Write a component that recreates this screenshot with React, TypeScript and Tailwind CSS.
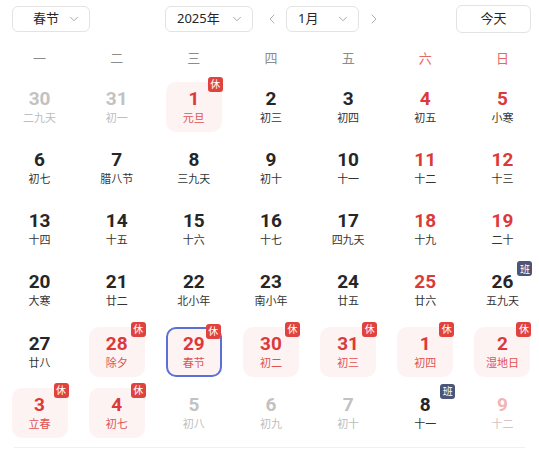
import { ChevronDown, ChevronLeft, ChevronRight } from "lucide-react";

type Day = {
  d: number;
  l: string;
  other?: boolean;
  rest?: boolean;
  work?: boolean;
  selected?: boolean;
};

const WEEK = ["一", "二", "三", "四", "五", "六", "日"];

const ROWS: Day[][] = [
  [
    { d: 30, l: "二九天", other: true },
    { d: 31, l: "初一", other: true },
    { d: 1, l: "元旦", rest: true },
    { d: 2, l: "初三" },
    { d: 3, l: "初四" },
    { d: 4, l: "初五" },
    { d: 5, l: "小寒" },
  ],
  [
    { d: 6, l: "初七" },
    { d: 7, l: "腊八节" },
    { d: 8, l: "三九天" },
    { d: 9, l: "初十" },
    { d: 10, l: "十一" },
    { d: 11, l: "十二" },
    { d: 12, l: "十三" },
  ],
  [
    { d: 13, l: "十四" },
    { d: 14, l: "十五" },
    { d: 15, l: "十六" },
    { d: 16, l: "十七" },
    { d: 17, l: "四九天" },
    { d: 18, l: "十九" },
    { d: 19, l: "二十" },
  ],
  [
    { d: 20, l: "大寒" },
    { d: 21, l: "廿二" },
    { d: 22, l: "北小年" },
    { d: 23, l: "南小年" },
    { d: 24, l: "廿五" },
    { d: 25, l: "廿六" },
    { d: 26, l: "五九天", work: true },
  ],
  [
    { d: 27, l: "廿八" },
    { d: 28, l: "除夕", rest: true },
    { d: 29, l: "春节", rest: true, selected: true },
    { d: 30, l: "初二", rest: true },
    { d: 31, l: "初三", rest: true },
    { d: 1, l: "初四", rest: true, other: true },
    { d: 2, l: "湿地日", rest: true, other: true },
  ],
  [
    { d: 3, l: "立春", rest: true, other: true },
    { d: 4, l: "初七", rest: true, other: true },
    { d: 5, l: "初八", other: true },
    { d: 6, l: "初九", other: true },
    { d: 7, l: "初十", other: true },
    { d: 8, l: "十一", other: true, work: true },
    { d: 9, l: "十二", other: true },
  ],
];

const Select = ({ label, width, pad = "pl-[11px]" }: { label: string; width: string; pad?: string }) => (
  <div
    className={`flex h-[26px] ${width} ${pad} items-center justify-between rounded-[6px] border border-[#e3e3e3] bg-white pr-[8px] text-[13px] text-[#262626]`}
  >
    <span>{label}</span>
    <ChevronDown className="h-[14px] w-[14px] text-[#9a9a9a]" strokeWidth={1.5} />
  </div>
);

const Cell = ({ day, col }: { day: Day; col: number }) => {
  const weekend = col >= 5;
  let num = "text-[#262626]";
  let lunar = "text-[#333333]";
  if (day.rest) {
    num = "text-[#dc3a3a]";
    lunar = "text-[#e05252]";
  } else if (day.work) {
    num = "text-[#262626]";
    lunar = "text-[#333333]";
  } else if (day.other && weekend) {
    num = "text-[#f2b4b4]";
    lunar = "text-[#d5c4c4]";
  } else if (day.other) {
    num = "text-[#c2c2c2]";
    lunar = "text-[#bdbdbd]";
  } else if (weekend) {
    num = "text-[#dc3a3a]";
  }

  return (
    <div className="flex h-[61.25px] items-center justify-center">
      <div
        className={`relative flex h-[50px] w-[56px] flex-col items-center justify-center rounded-[10px] pb-[1px] ${
          day.rest ? "bg-[#fdf3f2]" : ""
        } ${day.selected ? "border-2 border-[#5b6fd9]" : ""}`}
      >
        <span className={`font-['Roboto'] text-[19px] font-bold leading-[22px] ${num}`}>{day.d}</span>
        <span className={`mt-[1px] text-[11px] leading-[14px] ${lunar}`}>{day.l}</span>
        {day.rest ? (
          <span className="absolute right-[-1px] top-[-5px] flex h-[15px] w-[15px] items-center justify-center rounded-[3px] bg-[#e0433e] text-[10px] leading-none text-white">
            休
          </span>
        ) : null}
        {day.work ? (
          <span className="absolute right-[-2px] top-[-4px] flex h-[15px] w-[15px] items-center justify-center rounded-[3px] bg-[#4b5577] text-[10px] leading-none text-white">
            班
          </span>
        ) : null}
      </div>
    </div>
  );
};

export default function App() {
  return (
    <div className="h-[450px] w-[539px] overflow-hidden bg-white font-['Noto_Sans','Noto_Sans_CJK_SC',sans-serif]">
      <div className="flex h-[38px] items-center pl-[12px] pr-[8px]">
        <Select label="春节" width="w-[78px]" pad="pl-[20px]" />
        <div className="ml-[75px]">
          <Select label="2025年" width="w-[88px]" />
        </div>
        <ChevronLeft className="ml-[11px] h-[16px] w-[16px] text-[#b0b0b0]" strokeWidth={1.5} />
        <div className="ml-[6px]">
          <Select label="1月" width="w-[73px]" />
        </div>
        <ChevronRight className="ml-[7px] h-[16px] w-[16px] text-[#b0b0b0]" strokeWidth={1.5} />
        <button
          type="button"
          className="ml-auto h-[28px] w-[75px] rounded-[6px] border border-[#e3e3e3] bg-white text-[13px] text-[#262626]"
        >
          今天
        </button>
      </div>
      <div className="ml-[1px] w-[540px]">
        <div className="grid h-[38px] grid-cols-7 items-center pt-[4px] text-[13px]">
          {WEEK.map((w, i) => (
            <div key={w} className={`text-center ${i >= 5 ? "text-[#e86565]" : "text-[#8c8c8c]"}`}>
              {w}
            </div>
          ))}
        </div>
        {ROWS.map((row, r) => (
          <div key={r} className="grid grid-cols-7">
            {row.map((day, c) => (
              <Cell key={`${r}-${c}`} day={day} col={c} />
            ))}
          </div>
        ))}
      </div>
      <div className="mx-[14px] mt-[3px] border-t border-[#f0f0f0]" />
    </div>
  );
}
